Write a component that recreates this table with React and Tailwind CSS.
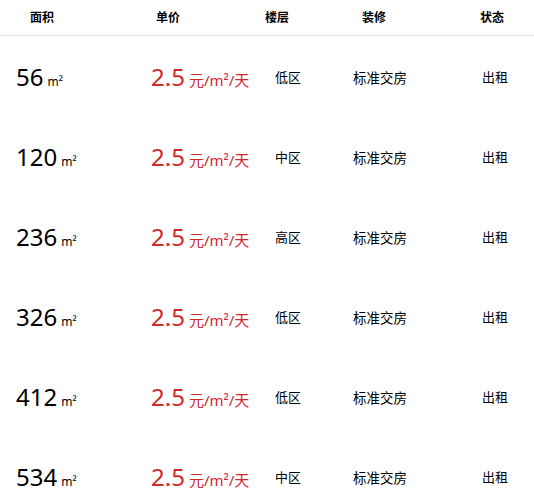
const rows = [
  { area: "56", floor: "低区" },
  { area: "120", floor: "中区" },
  { area: "236", floor: "高区" },
  { area: "326", floor: "低区" },
  { area: "412", floor: "低区" },
  { area: "534", floor: "中区" },
];

export default function App() {
  return (
    <div className="w-[534px] bg-white text-black font-['Noto_Sans','Noto_Sans_CJK_SC',sans-serif]">
      <div className="flex h-[36px] items-center border-b border-[#e5e5e5] text-[12px] font-bold">
        <div className="w-[83px] text-center pl-[1px]">面积</div>
        <div className="w-[170px] text-center">单价</div>
        <div className="w-[48px] text-center">楼层</div>
        <div className="w-[146px] text-center">装修</div>
        <div className="ml-[20px] w-[50px] text-center">状态</div>
      </div>
      {rows.map((r, i) => (
        <div key={i} className="flex h-[80px] items-center pt-[4px]">
          <div className="w-[135px] pl-[16px] flex items-baseline">
            <span className="text-[24px] leading-none">{r.area}</span>
            <span className="ml-[4px] text-[12px]">m²</span>
          </div>
          <div className="w-[140px] pl-[16px] flex items-baseline text-[#d0282e]">
            <span className="text-[24px] leading-none">2.5</span>
            <span className="ml-[4px] text-[15px]">元/m²/天</span>
          </div>
          <div className="w-[78px] text-[13px]">{r.floor}</div>
          <div className="w-[129px] text-[13.5px]">标准交房</div>
          <div className="text-[13px]">出租</div>
        </div>
      ))}
    </div>
  );
}
